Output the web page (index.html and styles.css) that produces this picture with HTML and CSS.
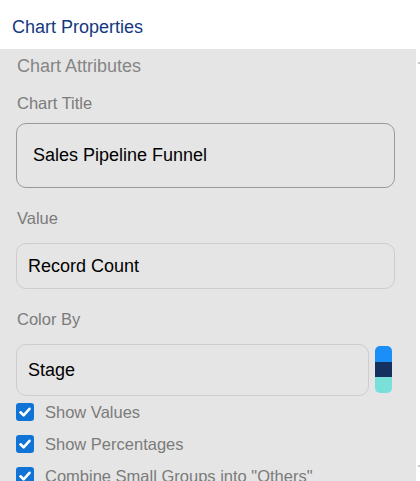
FILE: index.html
```html
<!DOCTYPE html>
<html>
<head>
<meta charset="utf-8">
<link rel="stylesheet" href="styles.css">
</head>
<body>
<div class="page">
  <header class="header">Chart Properties</header>
  <div class="body">
    <main class="panel">
      <div class="section-title">Chart Attributes</div>
      <div class="label l-title">Chart Title</div>
      <div class="field field-title">Sales Pipeline Funnel</div>
      <div class="label l-value">Value</div>
      <div class="field field-value">Record Count</div>
      <div class="label l-color">Color By</div>
      <div class="color-row">
        <div class="field field-stage">Stage</div>
        <div class="swatch"><span class="s1"></span><span class="s2"></span><span class="s3"></span></div>
      </div>
      <div class="checks">
        <label class="check"><span class="box"><svg viewBox="0 0 18 18" width="18" height="18"><path d="M4.5 9.3 L7.6 12.3 L13.5 5.8" fill="none" stroke="#fff" stroke-width="2.6" stroke-linecap="round" stroke-linejoin="round"/></svg></span><span class="ctext">Show Values</span></label>
        <label class="check"><span class="box"><svg viewBox="0 0 18 18" width="18" height="18"><path d="M4.5 9.3 L7.6 12.3 L13.5 5.8" fill="none" stroke="#fff" stroke-width="2.6" stroke-linecap="round" stroke-linejoin="round"/></svg></span><span class="ctext">Show Percentages</span></label>
        <label class="check"><span class="box"><svg viewBox="0 0 18 18" width="18" height="18"><path d="M4.5 9.3 L7.6 12.3 L13.5 5.8" fill="none" stroke="#fff" stroke-width="2.6" stroke-linecap="round" stroke-linejoin="round"/></svg></span><span class="ctext">Combine Small Groups into "Others"</span></label>
      </div>
    </main>
    <div class="scroll"><span class="tick"></span><span class="tick"></span></div>
  </div>
</div>
</body>
</html>
```
FILE: styles.css
```css
html, body {
  margin: 0;
  padding: 0;
  background: #fff;
  font-family: "Liberation Sans", Arial, sans-serif;
  overflow: hidden;
}
.page {
  width: 420px;
  height: 481px;
  display: flex;
  flex-direction: column;
}
.header {
  height: 49px;
  flex: none;
  box-sizing: border-box;
  padding: 17px 0 0 12px;
  font-size: 18px;
  line-height: 21px;
  color: #14397f;
  background: #fff;
}
.body {
  flex: 1;
  display: flex;
  min-height: 0;
}
.panel {
  width: 416px;
  flex: none;
  background: #e5e5e5;
  box-sizing: border-box;
  padding: 7px 0 0 16px;
  overflow: hidden;
}
.scroll {
  flex: 1;
  display: flex;
  flex-direction: column;
  justify-content: space-between;
  padding: 13px 0 14px;
}
.tick {
  display: block;
  width: 2px;
  height: 2px;
  margin-left: 2px;
  background: #c8c8c8;
}
.section-title {
  font-size: 18px;
  line-height: 21px;
  color: #858585;
  padding-left: 1px;
}
.label {
  font-size: 16.5px;
  line-height: 19px;
  color: #7b7b7b;
  padding-left: 1px;
}
.l-title { margin-top: 17px; }
.l-value { margin-top: 21px; }
.l-color { margin-top: 21px; }
.field {
  box-sizing: border-box;
  display: flex;
  align-items: center;
  font-size: 18px;
  color: #000;
  border-radius: 10px;
}
.field-title {
  margin-top: 10px;
  width: 379px;
  height: 65px;
  border: 1px solid #999;
  padding-left: 16px;
}
.field-value {
  margin-top: 15px;
  width: 379px;
  height: 46px;
  border: 1px solid #cdcdcd;
  padding-left: 11px;
}
.color-row {
  margin-top: 15px;
  display: flex;
  align-items: flex-start;
  gap: 6px;
}
.field-stage {
  width: 353px;
  height: 52px;
  border: 1px solid #cdcdcd;
  padding-left: 11px;
}
.swatch {
  margin-top: 2px;
  width: 17px;
  height: 47px;
  border-radius: 5px;
  overflow: hidden;
  display: flex;
  flex-direction: column;
}
.swatch span { flex: 1; }
.s1 { background: #1b8ff7; }
.s2 { background: #14305e; }
.s3 { background: #79e0d9; }
.checks {
  margin-top: 7px;
  display: flex;
  flex-direction: column;
  gap: 14px;
}
.check {
  display: flex;
  align-items: center;
  gap: 11px;
  height: 18px;
}
.box {
  width: 18px;
  height: 18px;
  border-radius: 3px;
  background: #0f74d6;
  flex: none;
  display: flex;
}
.ctext {
  font-size: 16.5px;
  line-height: 18px;
  color: #7b7b7b;
  white-space: nowrap;
}
```
